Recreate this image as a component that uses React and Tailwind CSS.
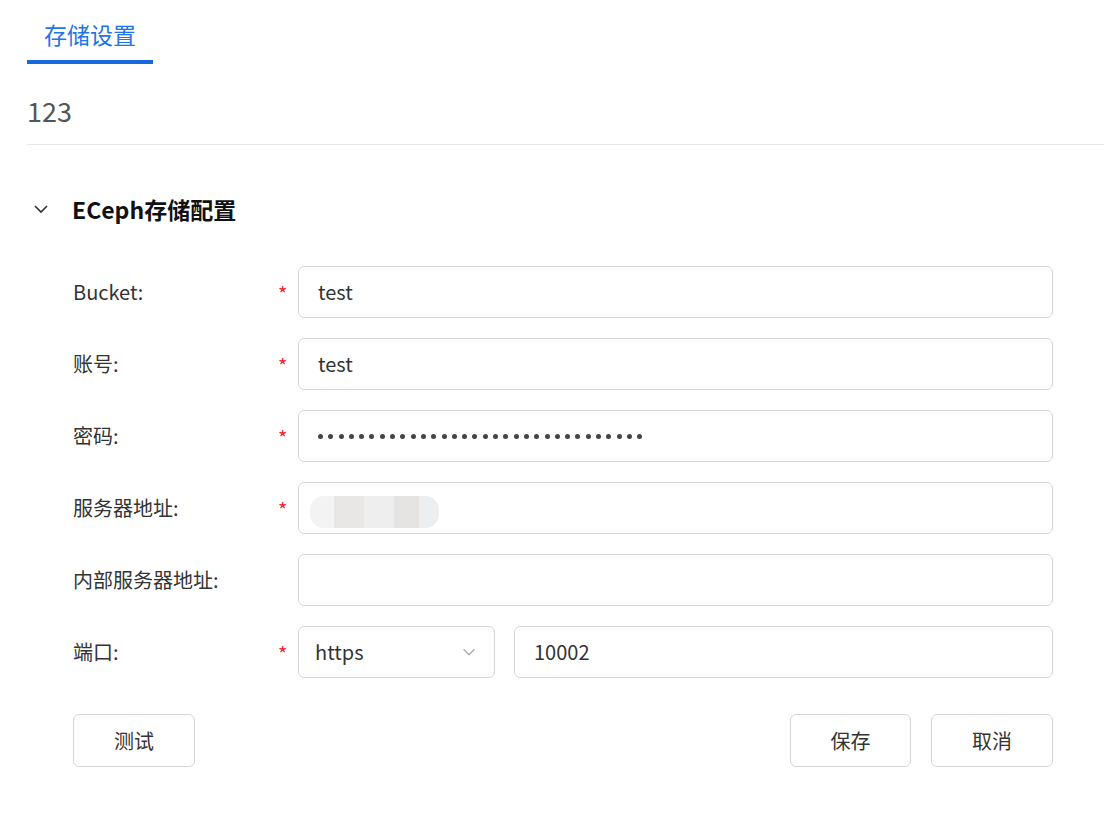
export default function App() {
  const f = { fontFamily: '"Noto Sans CJK SC","Microsoft YaHei",sans-serif' };
  const Row = ({ label, req, children }) => (
    <div className="flex items-center h-[52px] mb-[20px]">
      <div className="w-[205px] text-[20px] text-[#333]">{label}</div>
      <div className="w-[20px] text-[20px] text-[#f5222d] pt-1">{req ? '*' : ''}</div>
      <div className="flex-1 flex gap-[19px] h-full">{children}</div>
    </div>
  );
  const Inp = ({ children, cls = 'flex-1' }) => (
    <div className={`${cls} h-full border border-[#d6d6d9] rounded-[6px] flex items-center px-[19px] text-[20px] text-[#333]`}>{children}</div>
  );
  return (
    <div className="w-[1104px] h-[831px] bg-white overflow-hidden" style={f}>
      <div className="pl-[27px] pr-[0px]">
        <div className="w-[126px] pt-[17px] flex flex-col items-center">
          <span className="text-[23px] text-[#1f74e6] leading-[34px]">存储设置</span>
          <div className="w-full h-[4px] bg-[#1668dc] mt-[9px]" />
        </div>
        <div className="text-[27px] text-[#555] mt-[27px] leading-[40px]">123</div>
        <div className="h-px bg-[#e8e8e8] mt-[13px]" />
      </div>
      <div className="pl-[31px] mt-[47px] flex items-center h-[34px]">
        <svg width="20" height="20" viewBox="0 0 20 20" fill="none" stroke="#333" strokeWidth="1.6"><path d="M4 7l6 6 6-6" /></svg>
        <span className="ml-[21px] text-[23px] font-bold text-[#111]">ECeph存储配置</span>
      </div>
      <div className="pl-[73px] pr-[51px] mt-[40px]">
        <Row label="Bucket:" req><Inp>test</Inp></Row>
        <Row label="账号:" req><Inp>test</Inp></Row>
        <Row label="密码:" req><Inp><div className="flex gap-[5.3px]">{Array.from({ length: 32 }).map((_, i) => <span key={i} className="w-[5px] h-[5px] rounded-full bg-[#444]" />)}</div></Inp></Row>
        <Row label="服务器地址:" req><Inp><div className="flex rounded-[14px] overflow-hidden ml-[-8px] mt-[8px]"><div className="w-[24px] h-[32px] bg-[#f3f3f3]"/><div className="w-[30px] h-[32px] bg-[#e9e7e5]"/><div className="w-[30px] h-[32px] bg-[#eeeeee]"/><div className="w-[25px] h-[32px] bg-[#e5e4e2]"/><div className="w-[20px] h-[32px] bg-[#eceef0]"/></div></Inp></Row>
        <Row label="内部服务器地址:"><Inp></Inp></Row>
        <Row label="端口:" req>
          <Inp cls="w-[197px] justify-between !px-[16px]">
            <span>https</span>
            <svg width="18" height="18" viewBox="0 0 20 20" fill="none" stroke="#aaa" strokeWidth="1.5"><path d="M4 7l6 6 6-6" /></svg>
          </Inp>
          <Inp>10002</Inp>
        </Row>
        <div className="flex justify-between mt-[36px]">
          <div className="w-[122px] h-[53px] border border-[#d6d6d9] rounded-[6px] flex items-center justify-center text-[20px] text-[#333]">测试</div>
          <div className="flex gap-[20px]">
            <div className="w-[121px] h-[53px] border border-[#d6d6d9] rounded-[6px] flex items-center justify-center text-[20px] text-[#333]">保存</div>
            <div className="w-[122px] h-[53px] border border-[#d6d6d9] rounded-[6px] flex items-center justify-center text-[20px] text-[#333]">取消</div>
          </div>
        </div>
      </div>
    </div>
  );
}
